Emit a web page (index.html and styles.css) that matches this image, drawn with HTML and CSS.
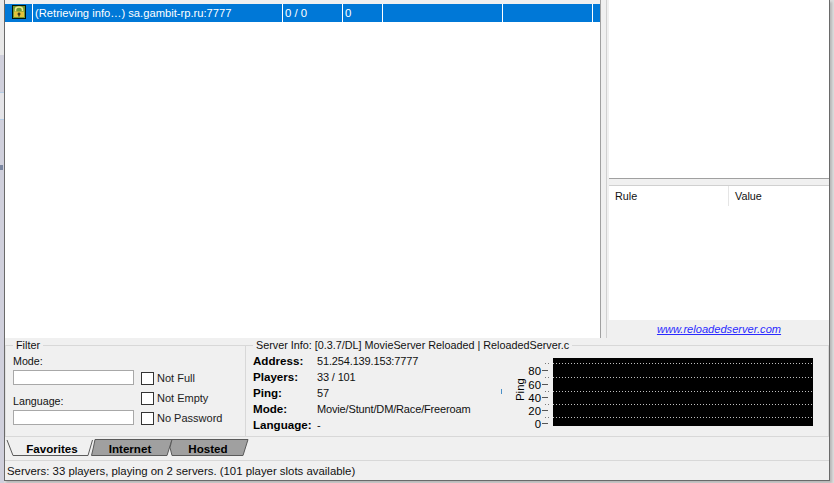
FILE: index.html
```html
<!DOCTYPE html>
<html lang="en">
<head>
<meta charset="utf-8">
<title>Server Browser</title>
<link rel="stylesheet" href="styles.css">
</head>
<body>
<div class="desktop">
  <div class="strip"><span class="strip-a"></span><span class="strip-b"></span><span class="strip-c"></span><span class="strip-d"></span><span class="strip-e"></span></div>
  <div class="window">
    <div class="upper">
      <div class="list-pane">
        <div class="list-head"></div>
        <div class="row">
          <div class="cell c-icon">
            <svg width="14" height="14" viewBox="0 0 14 14"><rect x="0.500" y="0.500" width="13" height="13" fill="#6f9a34" stroke="#06140a"/><path d="M3.500 6.500V4.500a3.500 2.500 0 0 1 7 0V6" fill="none" stroke="#e9e48c" stroke-width="1.600"/><rect x="2" y="6.500" width="10" height="5.500" fill="#e3c23a"/><path d="M7 7.500v4M5.500 9h3" stroke="#111" stroke-width="1.100"/></svg>
          </div>
          <div class="cell c-name">(Retrieving info…) sa.gambit-rp.ru:7777</div>
          <div class="cell c-players">0 / 0</div>
          <div class="cell c-ping">0</div>
          <div class="cell c-mode"></div>
          <div class="cell c-lang"></div>
          <div class="cell c-rest"></div>
        </div>
      </div>
      <div class="splitter"></div>
      <div class="side">
        <div class="players"></div>
        <div class="hsplit"></div>
        <div class="rules">
          <div class="rules-head"><span class="rule-col">Rule</span><span class="value-col">Value</span></div>
        </div>
        <div class="link-bar"><a class="link" href="#">www.reloadedserver.com</a></div>
      </div>
    </div>
    <div class="lower">
      <fieldset class="box filter">
        <legend>Filter</legend>
        <div class="filter-grid">
          <div class="fields">
            <label class="field-label">Mode:</label>
            <div class="input"></div>
            <label class="field-label lang">Language:</label>
            <div class="input"></div>
          </div>
          <div class="checks">
            <div class="check"><span class="tick"></span><span class="check-text">Not Full</span></div>
            <div class="check"><span class="tick"></span><span class="check-text">Not Empty</span></div>
            <div class="check"><span class="tick"></span><span class="check-text">No Password</span></div>
          </div>
        </div>
      </fieldset>
      <fieldset class="box info">
        <legend>Server Info: [0.3.7/DL] MovieServer Reloaded | ReloadedServer.c</legend>
        <div class="info-body">
          <dl class="facts">
            <dt>Address:</dt><dd>51.254.139.153:7777</dd>
            <dt>Players:</dt><dd>33 / 101</dd>
            <dt>Ping:</dt><dd>57</dd>
            <dt>Mode:</dt><dd>Movie/Stunt/DM/Race/Freeroam</dd>
            <dt>Language:</dt><dd>-</dd>
          </dl>
          <svg class="graph" width="318" height="74" viewBox="0 0 318 74">
            <rect x="0" y="33" width="1" height="5" fill="#4a90c8"/>
            <text class="ping-label" transform="translate(23 45) rotate(-90)">Ping</text>
            <rect x="52" y="2" width="260" height="68" fill="#000"/>
            <g class="grid"><path d="M52 7.500H312M52 21.500H312M52 35.500H312M52 48.500H312M52 61.500H312"/></g>
            <g class="dots"><path d="M44 7.500H48M44 21.500H48M44 35.500H48M44 48.500H48M44 61.500H48"/></g>
            <g class="ticks"><path d="M41 14.500H47M41 28.500H47M41 41.500H47M41 54.500H47M41 67.500H47"/></g>
            <text class="axis" x="40" y="19">80</text>
            <text class="axis" x="40" y="33">60</text>
            <text class="axis" x="40" y="46">40</text>
            <text class="axis" x="40" y="59">20</text>
            <text class="axis" x="40" y="72">0</text>
          </svg>
        </div>
      </fieldset>
    </div>
    <svg class="tabs" width="824" height="23" viewBox="0 0 824 23">
      <path class="tab-back" d="M90 2.500H167L162 18.500H86.500L88.500 10Z"/>
      <path class="tab-back" d="M167 2.500H243L238 18.500H167L165 10.500Z"/>
      <path class="tab-front" d="M2 3L8 18.500H83L87.500 3"/>
      <text x="47" y="15.500" text-anchor="middle">Favorites</text>
      <text x="125" y="15.500" text-anchor="middle">Internet</text>
      <text x="203" y="15.500" text-anchor="middle">Hosted</text>
    </svg>
    <div class="status">Servers: 33 players, playing on 2 servers. (101 player slots available)</div>
  </div>
</div>
</body>
</html>
```
FILE: styles.css
```css
* { box-sizing: border-box; }
html, body { margin: 0; padding: 0; height: 100%; overflow: hidden; background: #fff; }
body { font-family: "Liberation Sans", Arial, sans-serif; font-size: 11.4px; color: #000; }
.desktop { display: flex; width: 834px; height: 483px; background: #dcdcdc; }
.strip { width: 4px; flex: none; display: flex; flex-direction: column; background: #d0d0dc; }
.strip-a { height: 55px; background: #e8e8e8; }
.strip-b { height: 38px; background: #d0d0dc; border-bottom: 1px solid #b4cce4; }
.strip-c { height: 27px; background: #e4e4e8; border-bottom: 1px solid #b4cce4; }
.strip-d { height: 45px; background: #d0d0dc; }
.strip-e { height: 5px; width: 3px; background: #7a86a0; }
.window { flex: none; width: 826px; height: 481px; display: flex; flex-direction: column; border-left: 1px solid #6a6a6a; border-right: 1px solid #6a6a6a; border-bottom: 1px solid #6a6a6a; background: #f0f0f0; box-shadow: 2px 2px 2px #b8b8b8; }
.upper { display: flex; height: 338px; flex: none; background: #f0f0f0; }
.list-pane { width: 595px; flex: none; background: #fff; }
.list-head { height: 4px; background: #f0f0f0; }
.row { display: flex; height: 18px; background: #0078d7; color: #fff; }
.cell { height: 18px; line-height: 18px; border-right: 1px solid #fff; padding-left: 2px; white-space: nowrap; overflow: hidden; }
.c-icon { width: 28px; padding: 1px 0 0 7px; }
.c-icon svg { display: block; width: 14px; height: 14px; }
.c-name { width: 250px; font-size: 11.200px; }
.c-players { width: 60px; }
.c-ping { width: 40px; }
.c-mode { width: 120px; }
.c-lang { width: 90px; }
.c-rest { flex: 1; border-right: 0; }
.splitter { width: 7px; flex: none; background: #f0f0f0; border-left: 1px solid #a0a0a0; border-right: 1px solid #d0d0d0; }
.side { width: 220px; flex: none; margin-left: 2px; display: flex; flex-direction: column; background: #fff; }
.players { height: 178px; flex: none; background: #fff; }
.hsplit { height: 8px; flex: none; background: #f0f0f0; border-top: 1px solid #a0a0a0; border-bottom: 1px solid #d0d0d0; }
.rules { flex: 1; background: #fff; }
.rules-head { display: flex; height: 20px; line-height: 20px; font-size: 10.800px; color: #111; }
.rule-col { width: 120px; padding-left: 6px; border-right: 1px solid #e5e5e5; }
.value-col { padding-left: 6px; }
.link-bar { height: 18px; flex: none; background: #f0f0f0; text-align: center; line-height: 18px; }
.link { color: #2a2aff; font-style: italic; font-size: 11.100px; }
.lower { display: flex; height: 99px; flex: none; background: #f0f0f0; border-bottom: 1px solid #d8d8d8; }
.box { margin: 1px 0 0; padding: 0; min-width: 0; border: 0; border-top: 1px solid #d8d8d8; }
.box legend { padding: 0 3px; margin-left: 7px; line-height: 12px; height: 12px; color: #111; font-size: 10.800px; }
.filter { width: 241px; flex: none; border-left: 1px solid #e0e0e0; border-right: 1px solid #d8d8d8; }
.info { flex: 1; border-right: 1px solid #d8d8d8; }
.filter-grid { display: flex; padding-left: 7px; gap: 7px; }
.fields { width: 121px; flex: none; }
.field-label { display: block; height: 14px; line-height: 14px; color: #111; margin-top: 3px; font-size: 10.700px; }
.field-label.lang { margin-top: 9px; }
.input { height: 15px; margin-top: 2px; background: #fff; border: 1px solid #a8a8a8; }
.checks { display: flex; flex-direction: column; gap: 7px; padding-top: 21px; }
.check { display: flex; align-items: flex-start; gap: 3px; height: 13px; color: #222; font-size: 11px; white-space: nowrap; }
.check-text { display: block; line-height: 12px; }
.tick { width: 13px; height: 13px; flex: none; background: #fff; border: 1px solid #333; }
.info-body { display: flex; padding-left: 7px; }
.facts { margin: 2px 0 0; display: grid; grid-template-columns: 64px 183px; grid-auto-rows: 16px; line-height: 16px; }
.facts dt { font-weight: bold; font-size: 11.600px; }
.facts dd { margin: 0; color: #111; font-size: 11px; letter-spacing: -0.150px; white-space: nowrap; }
.graph { display: block; flex: none; margin: 5px 0 0 1px; }
.graph text { font-family: "Liberation Sans", Arial, sans-serif; font-size: 11.400px; fill: #000; }
.graph .axis { text-anchor: end; }
.grid path { stroke: #c0c0c0; stroke-dasharray: 1 2; fill: none; }
.dots path { stroke: #777; stroke-dasharray: 1 2; fill: none; }
.ticks path { stroke: #555; fill: none; }
.tabs { display: block; flex: none; width: 824px; height: 23px; }
.tabs text { font-family: "Liberation Sans", Arial, sans-serif; font-size: 11.600px; font-weight: bold; }
.tab-back { fill: #a0a0a0; stroke: #5a5a5a; }
.tab-front { fill: #f0f0f0; stroke: #5a5a5a; }
.status { flex: 1; border-top: 1px solid #d8d8d8; padding: 1px 0 0 2px; line-height: 18px; color: #111; white-space: nowrap; }
```
